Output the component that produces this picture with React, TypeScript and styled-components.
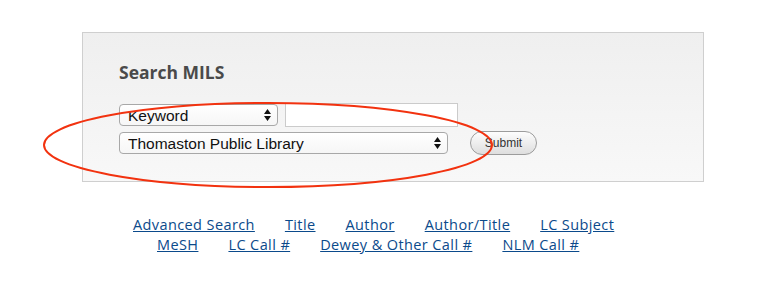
import React from 'react';
import styled, { createGlobalStyle } from 'styled-components';

const GlobalStyle = createGlobalStyle`
  html, body {
    margin: 0;
    padding: 0;
    background: #fff;
  }
`;

const Page = styled.div`
  position: relative;
  padding: 32px 0 0 82px;
  height: 294px;
  box-sizing: border-box;
`;

const Panel = styled.div`
  width: 622px;
  height: 150px;
  box-sizing: border-box;
  border: 1px solid #cfcfcf;
  background: linear-gradient(#efefef, #f8f8f8);
  padding: 29px 0 0 36px;
`;

const Heading = styled.h2`
  margin: 0 0 21px;
  font-family: "Open Sans", "DejaVu Sans", sans-serif;
  font-size: 17.5px;
  line-height: 20px;
  font-weight: bold;
  color: #4a4a4a;
`;

const Row = styled.div<{ $gap: number }>`
  display: flex;
  align-items: center;
  gap: ${p => p.$gap}px;
  margin-bottom: 4px;
`;

const SelectWrap = styled.div<{ $width: number }>`
  position: relative;
  width: ${p => p.$width}px;
  height: 22px;
`;

const Select = styled.select`
  appearance: none;
  -webkit-appearance: none;
  width: 100%;
  height: 100%;
  box-sizing: border-box;
  border: 1px solid #a8a8a8;
  border-radius: 4px;
  background: linear-gradient(#ffffff, #f6f6f6);
  padding: 0 22px 0 8px;
  font-family: "Liberation Sans", Arial, sans-serif;
  font-size: 15.5px;
  color: #111;
  outline: none;
`;

const Arrows = styled.svg`
  position: absolute;
  right: 7px;
  top: 5px;
  pointer-events: none;
`;

const TextInput = styled.input`
  width: 173px;
  height: 24px;
  box-sizing: border-box;
  border: 1px solid #cbcbcb;
  background: #fff;
  padding: 0 4px;
  outline: none;
`;

const Submit = styled.button`
  width: 67px;
  height: 24px;
  box-sizing: border-box;
  border: 1px solid #9c9c9c;
  border-radius: 12px;
  background: linear-gradient(#fdfdfd, #dedede);
  font-family: "Liberation Sans", Arial, sans-serif;
  font-size: 12px;
  color: #333;
  padding: 0;
`;

const Links = styled.div`
  margin: 33px 0 0 51px;
  font-family: "Open Sans", "DejaVu Sans", sans-serif;
  font-size: 14.5px;
  letter-spacing: 0.4px;
  line-height: 20px;
`;

const LinkRow = styled.div<{ $indent: number }>`
  display: flex;
  gap: 30px;
  padding-left: ${p => p.$indent}px;
`;

const Link = styled.a`
  color: #0b4a8b;
  text-decoration: underline;
  white-space: nowrap;
`;

const Circle = styled.svg`
  position: absolute;
  left: 40px;
  top: 100px;
  pointer-events: none;
`;

const SelectBox = ({ width, value }: { width: number; value: string }) => (
  <SelectWrap $width={width}>
    <Select defaultValue={value}>
      <option>{value}</option>
    </Select>
    <Arrows width="7" height="12" viewBox="0 0 7 12">
      <path d="M3.5 0 L7 5 L0 5 Z M0 7 L7 7 L3.5 12 Z" fill="#111" />
    </Arrows>
  </SelectWrap>
);

const row1 = ['Advanced Search', 'Title', 'Author', 'Author/Title', 'LC Subject'];
const row2 = ['MeSH', 'LC Call #', 'Dewey & Other Call #', 'NLM Call #'];

export default function App() {
  return (
    <Page>
      <GlobalStyle />
      <Panel>
        <Heading>Search MILS</Heading>
        <Row $gap={7}>
          <SelectBox width={159} value="Keyword" />
          <TextInput type="text" />
        </Row>
        <Row $gap={22}>
          <SelectBox width={329} value="Thomaston Public Library" />
          <Submit>Submit</Submit>
        </Row>
      </Panel>
      <Links>
        <LinkRow $indent={0}>
          {row1.map(l => <Link key={l} href="#">{l}</Link>)}
        </LinkRow>
        <LinkRow $indent={24}>
          {row2.map(l => <Link key={l} href="#">{l}</Link>)}
        </LinkRow>
      </Links>
      <Circle width="460" height="92" viewBox="0 0 460 92">
        <ellipse cx="228" cy="45" rx="224" ry="42" fill="none" stroke="#f2320f" strokeWidth="2" />
      </Circle>
    </Page>
  );
}
